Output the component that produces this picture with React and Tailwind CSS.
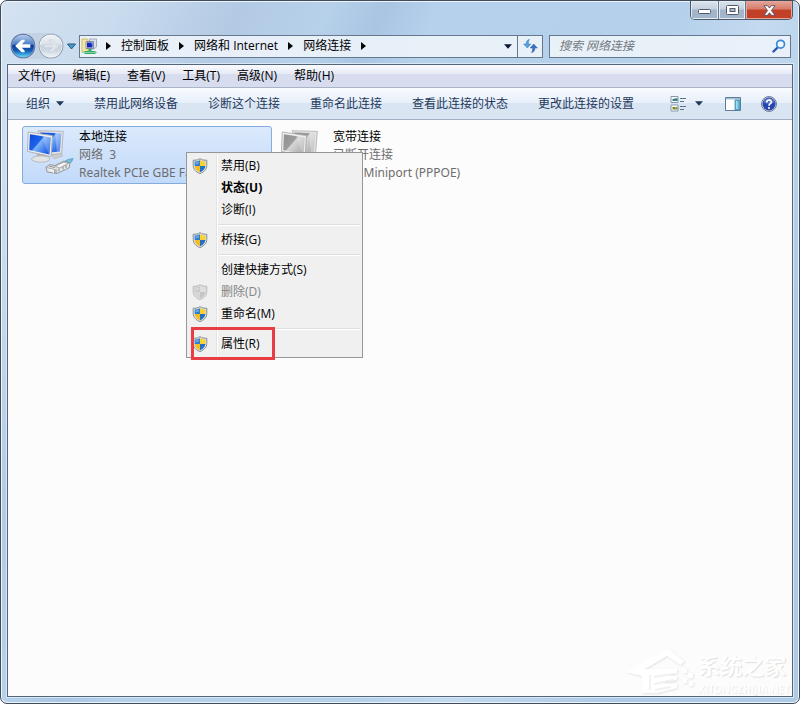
import React from "react";

const TEXT = "font-['Open_Sans','Noto_Sans_CJK_SC',sans-serif]";
const WIDE = "font-['Noto_Sans','Noto_Sans_CJK_SC',sans-serif]";

function Shield({ gray }) {
  const blue = gray ? "#c9c9c9" : "#2f7fd0";
  const yellow = gray ? "#dedede" : "#fbd22c";
  return (
    <svg width="16" height="16" viewBox="0 0 16 16" aria-hidden="true">
      <path d="M8 .6C6.300 1.900 3.700 2.400 1.200 2.200v5.300c0 3.800 2.800 6.700 6.800 8.100 4-1.400 6.800-4.300 6.800-8.100V2.200C12.300 2.400 9.700 1.900 8 .6z" fill={gray ? "#dcdcdc" : "#d9dcdc"} stroke={gray ? "#bdbdbd" : "#87929a"} strokeWidth="1" />
      <path d="M8 2.200C6.600 3.100 4.700 3.600 2.700 3.600V8H8z" fill={blue} />
      <path d="M8 2.200c1.400.9 3.300 1.400 5.300 1.400V8H8z" fill={yellow} />
      <path d="M2.700 8c.2 2.900 2.400 5 5.300 6.200V8z" fill={gray ? "#d6d6d6" : "#f6bd1d"} />
      <path d="M13.300 8c-.2 2.900-2.400 5-5.300 6.200V8z" fill={gray ? "#c4c4c4" : "#2470c4"} />
      <path d="M3.500 4.500c1.400 0 2.700-.3 3.700-.8v1.600L3.500 6.500z" fill="#fff" opacity=".35" />
    </svg>
  );
}

function Triangle({ down, color }) {
  return (
    <svg width={down ? 8 : 5} height={down ? 5 : 8} viewBox={down ? "0 0 9 5" : "0 0 5 8"} className="shrink-0" aria-hidden="true">
      <path d={down ? "M0 0h9L4.500 5z" : "M0 0v8l5-4z"} fill={color} />
    </svg>
  );
}

function Orb({ back }) {
  const id = back ? "orbBlue" : "orbGray";
  return (
    <svg width="26" height="26" viewBox="0 0 26 26" aria-hidden="true">
      <defs>
        <linearGradient id={id} x1="0" y1="0" x2="0" y2="1">
          <stop offset="0" stopColor={back ? "#b5ccee" : "#f0f3f7"} />
          <stop offset=".42" stopColor={back ? "#4a7cc4" : "#dbe2ea"} />
          <stop offset=".48" stopColor={back ? "#0d3c97" : "#c6d1dd"} />
          <stop offset=".72" stopColor={back ? "#145db4" : "#ced8e3"} />
          <stop offset="1" stopColor={back ? "#59d7f8" : "#eef2f6"} />
        </linearGradient>
      </defs>
      <circle cx="13" cy="13" r="12.300" fill={back ? "#4c6690" : "#8796a9"} />
      <circle cx="13" cy="13" r="11.500" fill={back ? "#8fa9d4" : "#f4f7fa"} />
      <circle cx="13" cy="13" r="10.900" fill={`url(#${id})`} />
      {back ? (
        <path d="M5.200 13l6.500-6.200h2.900v1.800l-2.900 2.700h8.600v3.400h-8.600l2.900 2.700v1.800h-2.900z" fill="#fff" />
      ) : (
        <path d="M20.800 13l-6.500-6.200h-2.900v1.800l2.900 2.700H6v3.400h8.300l-2.900 2.700v1.800h2.900z" fill="#dde4eb" stroke="#c3ceda" strokeWidth=".6" />
      )}
    </svg>
  );
}

function FolderIcon() {
  return (
    <svg width="17" height="17" viewBox="0 0 17 17" className="shrink-0" aria-hidden="true">
      <path d="M1 1h5l1 1v12H1z" fill="#f4e7a0" stroke="#d2bd63" />
      <path d="M8.500 1h7v8l-3 2h-4z" fill="#dce1e9" stroke="#a4acb8" />
      <path d="M5 3.500h7.500v7H5z" fill="#e3e6ee" stroke="#818c9e" />
      <path d="M6 4.500h5.500v5H6z" fill="#1726b8" />
      <path d="M9.500 4.500h2v3z" fill="#6487e8" />
      <path d="M7.500 11h3v2h4v3h-11v-3h4z" fill="#35ad6b" />
      <path d="M1 14h15v1H1z" fill="#83d2a4" />
    </svg>
  );
}

function Computers({ gray }) {
  const id = gray ? "screenGray" : "screenBlue";
  return (
    <svg width="48" height="48" viewBox="0 0 48 48" className="shrink-0" aria-hidden="true">
      <defs>
        <linearGradient id={id} x1="0" y1="0" x2="1" y2=".8">
          <stop offset="0" stopColor={gray ? "#8f8f8f" : "#0d49d6"} />
          <stop offset=".45" stopColor={gray ? "#9c9c9c" : "#1d63ea"} />
          <stop offset=".5" stopColor={gray ? "#d6d6d6" : "#7fb4fa"} />
          <stop offset="1" stopColor={gray ? "#adadad" : "#1557e2"} />
        </linearGradient>
      </defs>
      <path d="M24 26l10-1 2 3-9 3z" fill="#c9ccd1" stroke="#aeb1b6" strokeWidth=".5" />
      <path d="M11 2.700l25.300.7-1.700 22-12 1.600z" fill="#e4e4e4" stroke="#a9abae" strokeWidth=".8" />
      <path d="M13 4.600l21.300.6-1.500 18.300-10 1z" fill={`url(#${id})`} />
      <path d="M28 5l6.300.2-1.500 18.300-3 .3z" fill="#fff" opacity=".3" />
      <path d="M10 25l8 1.500.5 4-9-.5z" fill="#b2b5ba" />
      <ellipse cx="13.700" cy="31" rx="9.200" ry="3.200" fill="#e3e4e6" stroke="#b0b2b5" strokeWidth=".8" />
      <path d="M1.300 4l24.200 3.600-1.400 21L.4 23.400z" fill="#ededed" stroke="#a4a6aa" strokeWidth=".8" />
      <path d="M3 6.200l20.800 3.200-1.300 17L2.200 22z" fill={`url(#${id})`} />
      <path d="M15 8l8.800 1.400-1.300 17-1-.2z" fill="#fff" opacity=".2" />
      <path d="M35 35l6-3.500 5-1-1.500 3.500-6 4z" fill={gray ? "#c3c3c3" : "#6fc0e2"} stroke={gray ? "#9c9c9c" : "#4c9abb"} strokeWidth=".7" />
      <path d="M19 39l4-2.500 5 1 9-4.500 6 2-1 5-12 5.500-10-1.500z" fill="#e3e4e4" stroke="#85898c" strokeWidth=".8" />
      <path d="M28 38l9-4 4.500 1.300-9 4.700zM19.500 39.500l8 2v4" fill="#f6f7f8" stroke="#85898c" strokeWidth=".7" />
      <path d="M22 38l6 1.500m1 1.500v4m3-4.500v3m4-5v3m3-4.500v3" fill="none" stroke="#75797d" strokeWidth=".8" />
    </svg>
  );
}

function RefreshIcon() {
  return (
    <svg width="15" height="14" viewBox="0 0 15 14" aria-hidden="true">
      <path d="M6.500.5C3.800.8 3.200 2.700 3.200 5H.7l3.600 4 3.500-4H5.300c0-1.900.2-3.300 1.200-4.500z" fill="#55a3e0" stroke="#2f74b8" strokeWidth=".5" />
      <path d="M8.500 13.500c2.700-.3 3.300-2.200 3.300-4.500h2.500l-3.600-4-3.500 4h2.500c0 1.900-.2 3.300-1.200 4.500z" fill="#3b73c4" stroke="#26539e" strokeWidth=".5" />
    </svg>
  );
}

function SearchIcon() {
  return (
    <svg width="14" height="14" viewBox="0 0 14 14" aria-hidden="true">
      <path d="M1.500 12.500L6 8" stroke="#2a55b0" strokeWidth="2.400" strokeLinecap="round" />
      <circle cx="8.600" cy="5.200" r="3.900" fill="#eef7fe" stroke="#3b8ad6" strokeWidth="1.700" />
    </svg>
  );
}

function ViewIcon() {
  return (
    <svg width="17" height="16" viewBox="0 0 17 16" aria-hidden="true">
      <path d="M1 .5h7v6H1zM1 9h7v6H1z" fill="#fff" stroke="#8598ab" />
      <path d="M2.500 3l5-1v3h-5z" fill="#3b7f8b" />
      <path d="M2.500 11h5v2.500h-5z" fill="#6f8c2e" />
      <path d="M5 11h1.500v1.500H5z" fill="#d3a52c" />
      <path d="M10 2.500h6M10 5.500h4M10 10.500h6M10 13.500h4" stroke="#5a7188" />
    </svg>
  );
}

function PaneIcon() {
  return (
    <svg width="16" height="14" viewBox="0 0 16 14" aria-hidden="true">
      <path d="M.5.500h15v13H.5z" fill="#fff" stroke="#5d7d99" />
      <path d="M1 1h14v1.500H1z" fill="#a7c0d4" />
      <path d="M10 3h5v10h-5z" fill="#62b9d8" stroke="#4686a6" strokeWidth=".8" />
      <path d="M11 4h1.500v8H11z" fill="#a5e0f1" />
    </svg>
  );
}

function HelpIcon() {
  return (
    <svg width="16" height="16" viewBox="0 0 16 16" aria-hidden="true">
      <circle cx="8" cy="8" r="7.500" fill="#cfd7e6" stroke="#737f9c" />
      <circle cx="8" cy="8" r="6.500" fill="#2745b0" />
      <path d="M2.300 6.500a6 6 0 0 1 11.400 0Q8 9 2.300 6.500z" fill="#7d97dc" opacity=".55" />
      <path d="M5.700 6.400c0-3.300 4.700-3 4.700-.5C10.400 7.700 8 7.500 8 9.700" fill="none" stroke="#fff" strokeWidth="1.700" />
      <circle cx="8" cy="12" r="1.100" fill="#fff" />
    </svg>
  );
}

function WindowButtons() {
  const plain = "flex items-center justify-center border-r border-[#66788f] bg-linear-to-b from-[#dce5ee] from-0% via-[#c4d0dd] via-45% to-[#a3b5ca] to-50% shadow-[inset_0_0_0_1px_#e3ebf3]";
  return (
    <div className="mr-[6px] flex h-[19px] overflow-hidden rounded-b-[5px] border border-t-0 border-[#4c5a6c]">
      <button type="button" aria-label="最小化" className={"w-[28px] pt-1 " + plain}>
        <svg width="13" height="6" viewBox="0 0 13 6"><rect x=".5" y=".5" width="12" height="4" rx="1" fill="#fff" stroke="#535a69" /></svg>
      </button>
      <button type="button" aria-label="最大化" className={"w-[27px] " + plain}>
        <svg width="13" height="10" viewBox="0 0 13 10"><rect x=".5" y=".5" width="12" height="9" rx="1" fill="#fff" stroke="#535a69" /><rect x="4" y="3.500" width="5" height="3" fill="#aebccb" stroke="#535a69" /></svg>
      </button>
      <button type="button" aria-label="关闭" className="flex w-[46px] items-center justify-center bg-linear-to-b from-[#e3a79c] from-0% via-[#d67a68] via-45% to-[#c23f28] to-50% shadow-[inset_0_0_0_1px_#e5a597]">
        <svg width="13" height="11" viewBox="0 0 13 11"><path d="M1 .7h3.500l2 2.300 2-2.300H12L8.400 5.500l3.600 4.800H8.500l-2-2.500-2 2.500H1l3.600-4.800z" fill="#fff" stroke="#555064" strokeWidth=".9" /></svg>
      </button>
    </div>
  );
}

const crumbs = ["控制面板", "网络和 Internet", "网络连接"];
const menus = ["文件(F)", "编辑(E)", "查看(V)", "工具(T)", "高级(N)", "帮助(H)"];
const commands = ["禁用此网络设备", "诊断这个连接", "重命名此连接", "查看此连接的状态", "更改此连接的设置"];

const groups = [
  [{ label: "禁用(B)", shield: true }, { label: "状态(U)", bold: true }, { label: "诊断(I)" }],
  [{ label: "桥接(G)", shield: true }],
  [{ label: "创建快捷方式(S)" }, { label: "删除(D)", shield: true, disabled: true }, { label: "重命名(M)", shield: true }],
  [{ label: "属性(R)", shield: true, marked: true }],
];

function ContextMenu() {
  return (
    <div role="menu" className="absolute top-[32px] left-[178px] w-[177px] border border-[#979797] bg-[#f0f0f0] py-[2px]">
      {groups.map((group, g) => (
        <div key={g}>
          {g > 0 && (
            <div className="flex h-2 items-center pr-[2px] pl-[29px]">
              <div className="h-full w-[2px] border-l border-[#e2e3e3] bg-white" />
              <div className="h-[2px] flex-1 border-t border-[#dedede] bg-white" />
            </div>
          )}
          {group.map((item) => (
            <button key={item.label} type="button" role="menuitem" disabled={item.disabled} className="relative flex h-[22px] w-full items-center text-left text-xs text-black disabled:text-[#838383]">
              <span className="flex w-[29px] justify-center pr-[3px]">{item.shield && <Shield gray={item.disabled} />}</span>
              <span className="h-full w-[2px] border-l border-[#e2e3e3] bg-white" />
              <span className={item.bold ? "pl-[3px] font-bold" : "pl-[3px]"}>{item.label}</span>
              {item.marked && <span className="absolute -top-[6px] left-[4px] h-[33px] w-[84px] border-3 border-[#e83e43]" />}
            </button>
          ))}
        </div>
      ))}
    </div>
  );
}

function Connection({ name, status, device, selected }) {
  return (
    <div className={"flex h-[58px] w-[250px] gap-1 rounded-[3px] border px-1 pt-px " + (selected ? "border-[#84acdd] bg-linear-to-b from-[#dbe9fc] to-[#c2dafa]" : "border-transparent")}>
      <Computers gray={!selected} />
      <div className={"text-xs leading-[18px] whitespace-pre text-[#6d6d6d] " + WIDE}>
        <div className="text-black">{name}</div>
        <div>{status}</div>
        <div>{device}</div>
      </div>
    </div>
  );
}

function Watermark() {
  return (
    <div className="absolute right-[2px] bottom-0 flex items-end text-white select-none" aria-hidden="true">
      <svg width="72" height="48" viewBox="0 0 72 48" className="drop-shadow-[1px_1px_1px_rgba(0,0,0,0.1)]">
        <path d="M0 24L42 1l16 12-3 4-14-9-22 13h32v4l-12 2 12 1v4l-17 3 17 1v4l-20 5H16V28z" fill="#fff" />
        <path d="M24 27v15M28 29l18-3M28 36l20-4M29 42l16-3" stroke="#f1f1f1" strokeWidth="2" />
        <path d="M57 21h4v4h-4zM62 25h5v5h-5zM57 31h4v4h-4zM63 34h4v4h-4z" fill="#fff" />
      </svg>
      <div className="[text-shadow:1px_1px_1px_#dedede]">
        <div className="text-[22px] leading-[34px] font-bold">系统之家</div>
        <div className="text-[10px] leading-[14px] font-bold opacity-60">XITONGZHIJIA.NET</div>
      </div>
    </div>
  );
}

export default function App() {
  return (
    <div className={"flex min-h-screen flex-col rounded-[7px] border border-[#414b59] bg-[linear-gradient(115deg,#d4e2f1_0px,#c9dbee_110px,#b3cae4_220px,#b7d1ea_300px,#a9c5e2_350px,#b5d1ec_400px,#b4d0eb_620px,#c3daef_700px,#aecae7_850px)] text-xs text-black shadow-[inset_0_0_0_1px_#eaf5fd] " + TEXT}>
      <header className="h-[63px] shrink-0">
        <div className="flex h-[32px] items-start justify-end"><WindowButtons /></div>
        <div className="flex items-center pr-[8px] pl-[9px]">
          <div className="flex items-center gap-[2px] rounded-full bg-[#bdcbdc]/60">
            <button type="button" aria-label="后退"><Orb back /></button>
            <button type="button" aria-label="前进"><Orb /></button>
          </div>
          <button type="button" aria-label="最近的页面" className="px-[3px]">
            <svg width="9" height="7" viewBox="0 0 9 7"><path d="M.5 1h8l-4 5z" fill="#3c9bd0" stroke="#31557c" /></svg>
          </button>
          <div className="flex h-[23px] min-w-0 flex-1 border border-[#65788d] bg-[#edf3f9]/90">
            <nav className="flex flex-1 items-center gap-2 pl-px whitespace-nowrap" aria-label="路径">
              <FolderIcon />
              {crumbs.map((c) => (
                <React.Fragment key={c}>
                  <Triangle color="#000" />
                  <a href="#" className="px-[2px]">{c}</a>
                </React.Fragment>
              ))}
              <Triangle color="#000" />
            </nav>
            <button type="button" aria-label="历史" className="px-[5px]"><Triangle down color="#101638" /></button>
            <button type="button" aria-label="刷新" className="flex w-[25px] items-center justify-center border-l border-[#65788d]"><RefreshIcon /></button>
          </div>
          <div className="ml-[6px] flex h-[23px] w-[242px] items-center border border-[#65788d] bg-[#edf3f9]/90 pr-[4px] pl-[9px]">
            <input type="search" aria-label="搜索" placeholder="搜索 网络连接" className="min-w-0 flex-1 bg-transparent italic outline-none placeholder:text-[#747b82]" />
            <button type="button" aria-label="搜索"><SearchIcon /></button>
          </div>
        </div>
      </header>
      <div className="mx-[6px] mb-[6px] flex flex-1 flex-col border border-[#536579] bg-[#fcfcfc] shadow-[0_0_0_1px_#d9e8f6]">
        <div className="flex h-[23px] shrink-0 items-center gap-[17px] border-b border-[#abb5c9] bg-linear-to-b from-[#fafbfe] from-0% via-[#e6eaf5] via-40% to-[#d7ddee] to-42% pl-[10px]">
          {menus.map((m) => <button type="button" key={m}>{m}</button>)}
        </div>
        <div className="flex h-[32px] shrink-0 items-center border-b border-[#a0afc3] bg-linear-to-b from-[#f9fbfe] from-0% via-[#e7effa] via-48% to-[#dae5f3] to-50% px-[15px] text-[#1e395b]">
          <div className="flex flex-1 items-center gap-[30px] pl-[3px] whitespace-nowrap">
            <button type="button" className="flex items-center gap-[6px]">组织<Triangle down color="#1e395b" /></button>
            {commands.map((c) => <button type="button" key={c}>{c}</button>)}
          </div>
          <button type="button" aria-label="更改视图" className="flex items-center gap-2"><ViewIcon /><Triangle down color="#1e395b" /></button>
          <button type="button" aria-label="预览窗格" className="ml-[22px]"><PaneIcon /></button>
          <button type="button" aria-label="帮助" className="ml-[20px]"><HelpIcon /></button>
        </div>
        <main className="relative flex-1 overflow-hidden">
          <div className="flex flex-wrap gap-1 px-[14px] pt-[6px]">
            <Connection selected name="本地连接" status="网络  3" device="Realtek PCIe GBE Fam..." />
            <Connection name="宽带连接" status="已断开连接" device="WAN Miniport (PPPOE)" />
          </div>
          <ContextMenu />
          <Watermark />
        </main>
      </div>
    </div>
  );
}
